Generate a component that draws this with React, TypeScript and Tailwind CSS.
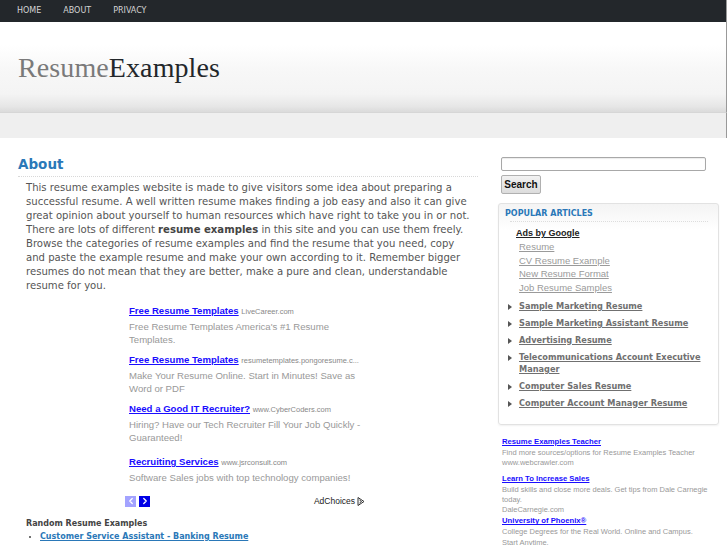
import { ChevronLeft, ChevronRight } from "lucide-react";

const dejavu = "font-['DejaVu_Sans',Verdana,sans-serif]";
const arial = "font-['Liberation_Sans',Arial,sans-serif]";

const ADS = [
  {
    title: "Free Resume Templates",
    host: "LiveCareer.com",
    text: "Free Resume Templates America's #1 Resume Templates.",
    gap: "mt-0",
  },
  {
    title: "Free Resume Templates",
    host: "resumetemplates.pongoresume.c...",
    text: "Make Your Resume Online. Start in Minutes! Save as Word or PDF",
    gap: "mt-[8px]",
  },
  {
    title: "Need a Good IT Recruiter?",
    host: "www.CyberCoders.com",
    text: "Hiring? Have our Tech Recruiter Fill Your Job Quickly - Guaranteed!",
    gap: "mt-[8px]",
  },
  {
    title: "Recruiting Services",
    host: "www.jsrconsult.com",
    text: "Software Sales jobs with top technology companies!",
    gap: "mt-[12px]",
  },
];

const POPULAR = [
  ["Sample Marketing Resume"],
  ["Sample Marketing Assistant Resume"],
  ["Advertising Resume"],
  ["Telecommunications Account Executive", "Manager"],
  ["Computer Sales Resume"],
  ["Computer Account Manager Resume"],
];

const SIDE_ADS = [
  {
    title: "Resume Examples Teacher",
    lines: ["Find more sources/options for Resume Examples Teacher", "www.webcrawler.com"],
    gap: "mt-0",
  },
  {
    title: "Learn To Increase Sales",
    lines: ["Build skills and close more deals. Get tips from Dale Carnegie", "today.", "DaleCarnegie.com"],
    gap: "mt-[5px]",
  },
  {
    title: "University of Phoenix®",
    lines: ["College Degrees for the Real World. Online and Campus.", "Start Anytime."],
    gap: "mt-[1px]",
  },
];

function Triangle() {
  return (
    <svg width="4" height="6" viewBox="0 0 4 6" className="shrink-0 mt-[4px]">
      <path d="M0 0 L4 3 L0 6 Z" fill="#555" />
    </svg>
  );
}

export default function App() {
  return (
    <div className={`w-[727px] h-[545px] overflow-hidden bg-white ${dejavu}`}>
      {/* NAV */}
      <nav className="h-[22px] bg-[#23272b] flex items-center pl-[6px] border-r border-[#999]">
        {["HOME", "ABOUT", "PRIVACY"].map((n) => (
          <span key={n} className="px-[11px] text-[8px] leading-none text-[#d4d4d4]">
            {n}
          </span>
        ))}
      </nav>

      {/* HEADER */}
      <header className="h-[90px] bg-[linear-gradient(to_bottom,#ffffff_0%,#ffffff_25%,#f7f7f7_55%,#f4f4f4_80%,#e6e6e6_94%,#dcdcdc_99%)] border-r border-[#999] flex items-start pl-[18px] pt-[26px]">
        <div className="font-['Liberation_Serif',serif] text-[28px] leading-[40px] tracking-[0.1px]">
          <span className="text-[#7a7a7a]">Resume</span>
          <span className="text-[#23272b]">Examples</span>
        </div>
      </header>
      <div className="h-[26px] bg-[#efefef] border-t border-[#d6d6d6] border-r border-r-[#999]" />

      {/* BODY */}
      <div className="flex">
        {/* MAIN */}
        <main className="w-[460px] ml-[18px] pt-[17px]">
          <h1 className="text-[13.5px] leading-[18px] font-bold text-[#2a78b8] pb-[3px] border-b border-dotted border-[#d8d8d8]">
            About
          </h1>
          <p className="mt-[4px] ml-[8px] w-[445px] text-[10.1px] leading-[14px] text-[#555]">
            This resume examples website is made to give visitors some idea about preparing a successful resume. A
            well written resume makes finding a job easy and also it can give great opinion about yourself to human
            resources which have right to take you in or not. There are lots of different{" "}
            <b className="text-[#444]">resume examples</b> in this site and you can use them freely. Browse the
            categories of resume examples and find the resume that you need, copy and paste the example resume and
            make your own according to it. Remember bigger resumes do not mean that they are better, make a pure and
            clean, understandable resume for you.
          </p>

          <div className={`ml-[111px] w-[240px] mt-[12px] ${arial}`}>
            {ADS.map((ad, i) => (
              <div key={i} className={ad.gap}>
                <div className="text-[9.6px] leading-[12px] whitespace-nowrap">
                  <span className="font-bold text-[#1a0dff] underline">{ad.title}</span>{" "}
                  <span className="text-[7.5px] text-[#888]">{ad.host}</span>
                </div>
                <p className="mt-[2px] text-[9.6px] leading-[13px] text-[#999]">{ad.text}</p>
              </div>
            ))}
            <div className="flex items-center justify-between mt-[11px] -ml-[4px] mr-[4px]">
              <div className="flex gap-[3px]">
                <span className="w-[11px] h-[11px] bg-[#a3a3ff] flex items-center justify-center">
                  <ChevronLeft size={10} strokeWidth={3} className="text-white" />
                </span>
                <span className="w-[11px] h-[11px] bg-[#0000e6] flex items-center justify-center">
                  <ChevronRight size={10} strokeWidth={3} className="text-white" />
                </span>
              </div>
              <div className="flex items-center gap-[2px] text-[8.5px] text-[#222]">
                AdChoices
                <svg width="8" height="9" viewBox="0 0 8 9">
                  <path d="M1 0.5 V8.5 M1 0.5 L7 4.5 L1 8.5" fill="none" stroke="#333" strokeWidth="1" />
                  <path d="M2.5 3 L4.5 4.5 L2.5 6" fill="none" stroke="#333" strokeWidth="1" />
                </svg>
              </div>
            </div>
          </div>

          <div className="ml-[8px] mt-[10px]">
            <div className="text-[8px] leading-[11px] font-bold text-[#444]">Random Resume Examples</div>
            <ul className="ml-[14px] mt-[2px] list-disc list-outside text-[#444]">
              <li className="text-[8px] leading-[12px] font-bold text-[#2a78b8] underline marker:text-[#444]">
                Customer Service Assistant - Banking Resume
              </li>
            </ul>
          </div>
        </main>

        {/* SIDEBAR */}
        <aside className="ml-[20px] w-[221px] pt-[19px]">
          <div className="ml-[3px]">
            <div className="w-[205px] h-[14px] border border-[#a8a8a8] rounded-[2px] bg-white shadow-[inset_0_1px_1px_rgba(0,0,0,0.08)]" />
            <button
              className={`mt-[1px] w-[40px] h-[19px] border border-[#b0b0b0] rounded-[2px] bg-[linear-gradient(to_bottom,#f2f2f2,#dcdcdc)] text-[10px] font-bold text-[#111] ${arial}`}
            >
              Search
            </button>
          </div>

          <div className="mt-[8px] h-[222px] border border-[#e2e2e2] rounded-[3px] shadow-[0_1px_2px_rgba(0,0,0,0.06)] bg-[linear-gradient(to_bottom,#f4f4f4,#ffffff_12%)]">
            <div className="pl-[6px] pt-[5px] text-[8px] leading-[10px] font-bold text-[#2a78b8]">
              POPULAR ARTICLES
            </div>
            <div className="ml-[11px] mr-[10px] mt-[2px] border-b border-dotted border-[#ddd]" />

            <div className={`${arial} ml-[17px] mt-[5px]`}>
              <div className="text-[9px] leading-[12px] font-bold text-[#222] underline">Ads by Google</div>
              <div className="ml-[3px] mt-[1px] flex flex-col">
                {["Resume", "CV Resume Example", "New Resume Format", "Job Resume Samples"].map((l) => (
                  <span key={l} className="text-[9.5px] leading-[13.7px] text-[#9a9a9a] underline">
                    {l}
                  </span>
                ))}
              </div>
            </div>

            <div className="ml-[9px] mt-[5px] flex flex-col gap-[5px]">
              {POPULAR.map((p) => (
                <div key={p[0]} className="flex gap-[7px]">
                  <Triangle />
                  <span className="text-[8.2px] leading-[12px] font-bold text-[#707070] underline">
                    {p.map((line, j) => (
                      <span key={j} className="block">
                        {line}
                      </span>
                    ))}
                  </span>
                </div>
              ))}
            </div>
          </div>

          <div className={`${arial} ml-[4px] mt-[12px] flex flex-col`}>
            {SIDE_ADS.map((a) => (
              <div key={a.title} className={a.gap}>
                <div className="text-[7.7px] leading-[10px] font-bold text-[#1a0dff] underline">{a.title}</div>
                <div className="mt-[1px]">
                  {a.lines.map((l) => (
                    <div key={l} className="text-[7.5px] leading-[10.3px] text-[#999]">
                      {l}
                    </div>
                  ))}
                </div>
              </div>
            ))}
          </div>
        </aside>
      </div>
    </div>
  );
}
